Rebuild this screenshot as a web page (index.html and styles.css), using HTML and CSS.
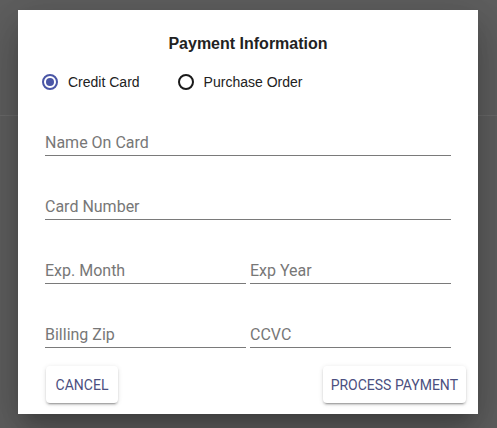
FILE: index.html
```html
<!DOCTYPE html>
<html>
<head>
<meta charset="utf-8">
<link rel="stylesheet" href="styles.css">
</head>
<body>
<div class="page">
  <div class="page-header"></div>
</div>
<div class="overlay">
  <div class="dialog">
    <h2 class="title">Payment Information</h2>
    <div class="radios">
      <label class="radio"><span class="circle checked"><span class="dot"></span></span><span class="radio-label">Credit Card</span></label>
      <label class="radio"><span class="circle"></span><span class="radio-label">Purchase Order</span></label>
    </div>
    <div class="fields">
      <div class="field wide"><span class="placeholder">Name On Card</span></div>
      <div class="field wide"><span class="placeholder">Card Number</span></div>
      <div class="field"><span class="placeholder">Exp. Month</span></div>
      <div class="field"><span class="placeholder">Exp Year</span></div>
      <div class="field"><span class="placeholder">Billing Zip</span></div>
      <div class="field"><span class="placeholder">CCVC</span></div>
    </div>
    <div class="actions">
      <button class="btn">CANCEL</button>
      <button class="btn">PROCESS PAYMENT</button>
    </div>
  </div>
</div>
</body>
</html>
```

FILE: styles.css
```css
html, body {
  margin: 0;
  padding: 0;
}
body {
  width: 497px;
  height: 428px;
  background: #5f5f5f;
  overflow: hidden;
  position: relative;
  font-family: "Liberation Sans", Arial, sans-serif;
}
.page-header {
  height: 115px;
  border-bottom: 1px solid #6a6a6a;
}
.overlay {
  position: absolute;
  inset: 0;
  display: flex;
  justify-content: flex-start;
  align-items: flex-start;
  padding: 10px 0 0 18px;
}
.dialog {
  width: 460px;
  height: 404px;
  box-sizing: border-box;
  background: #fff;
  padding-top: 24px;
  display: flex;
  flex-direction: column;
  box-shadow: 0 11px 15px -7px rgba(0,0,0,.2), 0 24px 38px 3px rgba(0,0,0,.14), 0 9px 46px 8px rgba(0,0,0,.12);
}
.title {
  margin: 0;
  font-size: 16px;
  line-height: 20px;
  font-weight: bold;
  color: #222;
  text-align: center;
}
.radios {
  margin-top: 18px;
  padding-left: 24px;
  display: flex;
  height: 20px;
  align-items: center;
  gap: 38px;
}
.radio {
  display: flex;
  align-items: center;
  gap: 10px;
  font-size: 14px;
  color: #212121;
}
.circle {
  width: 16px;
  height: 16px;
  box-sizing: border-box;
  border: 2px solid #1a1a1a;
  border-radius: 50%;
  display: flex;
  align-items: center;
  justify-content: center;
}
.circle.checked {
  border-color: #4a56a6;
}
.dot {
  width: 8px;
  height: 8px;
  border-radius: 50%;
  background: #4a56a6;
}
.fields {
  margin-top: 39px;
  padding: 0 27px;
  display: grid;
  grid-template-columns: 1fr 1fr;
  column-gap: 4px;
  row-gap: 39px;
}
.field {
  height: 24px;
  border-bottom: 1px solid #7a7a7a;
  font-family: Roboto, "Liberation Sans", sans-serif;
  font-size: 16px;
  line-height: 24px;
  color: #777;
}
.field.wide {
  grid-column: 1 / 3;
}
.actions {
  margin-top: 18px;
  padding: 0 12px 0 28px;
  display: flex;
  justify-content: space-between;
}
.btn {
  height: 37px;
  min-width: 72px;
  padding: 0 8px;
  border: none;
  border-radius: 4px;
  background: #fff;
  font-family: Roboto, "Liberation Sans", sans-serif;
  font-size: 14px;
  color: #4b4f80;
  box-shadow: 0 3px 1px -2px rgba(0,0,0,.2), 0 2px 2px 0 rgba(0,0,0,.14), 0 1px 5px 0 rgba(0,0,0,.12);
}
```
